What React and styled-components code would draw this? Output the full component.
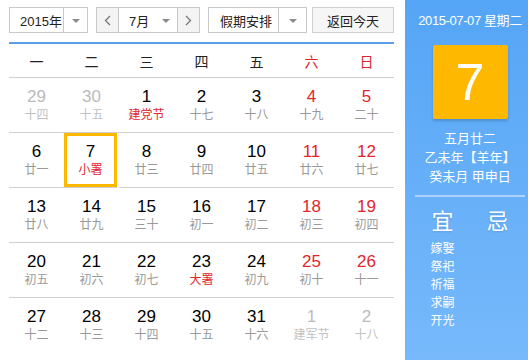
import React from 'react';
import styled, { createGlobalStyle, css } from 'styled-components';

const GlobalStyle = createGlobalStyle`
  body {
    margin: 0;
    font-family: "Liberation Sans", "Noto Sans CJK SC", sans-serif;
    background: #fff;
  }
`

const Page = styled.div`
  display: flex;
  width: 528px;
  height: 360px;
  overflow: hidden;
`

const Main = styled.div`
  width: 385px;
  padding: 7px 11px 0 9px;
`

const Toolbar = styled.div`
  display: flex;
  align-items: center;
  height: 26px;
  margin-bottom: 9px;
`

const Select = styled.div`
  display: flex;
  height: 26px;
  box-sizing: border-box;
  border: 1px solid #c9c9c9;
  background: #fff;
  width: ${p => p.$width}px;
  margin-right: ${p => p.$gap || 0}px;
  font-size: 13px;
  color: #222;
`

const SelectText = styled.div`
  flex: 1;
  display: flex;
  align-items: center;
  padding-left: ${p => p.$pad || 0}px;
`

const ArrowBox = styled.div`
  width: ${p => p.$w || 23}px;
  display: flex;
  align-items: center;
  justify-content: center;
  border-left: ${p => p.$line ? '1px solid #c9c9c9' : 'none'};
  &::after {
    content: '';
    border-left: 4px solid transparent;
    border-right: 4px solid transparent;
    border-top: 4px solid #8a8a8a;
    margin-top: 1px;
  }
`

const NavBtn = styled.div`
  width: 21px;
  display: flex;
  align-items: center;
  justify-content: center;
  background: #f4f4f4;
  ${p => p.$side === 'left' ? css`border-right: 1px solid #c9c9c9;` : css`border-left: 1px solid #c9c9c9;`}
`

const Button = styled.div`
  width: 82px;
  height: 26px;
  box-sizing: border-box;
  border: 1px solid #d0d0d0;
  background: #f6f6f6;
  display: flex;
  align-items: center;
  justify-content: center;
  font-size: 13px;
  color: #222;
`

const Grid = styled.div`
  display: grid;
  grid-template-columns: repeat(7, 55px);
  border-top: 2px solid #5a9ee8;
`

const Head = styled.div`
  height: 33px;
  display: flex;
  align-items: center;
  justify-content: center;
  font-size: 14px;
  color: ${p => p.$red ? '#d9262c' : '#222'};
  border-bottom: 1px solid #d0d0d0;
`

const Cell = styled.div`
  height: 54px;
  display: flex;
  flex-direction: column;
  align-items: center;
  justify-content: center;
  border-bottom: ${p => p.$last ? 'none' : '1px solid #d0d0d0'};
  ${p => p.$today && css`box-shadow: inset 0 0 0 3px #ffb800; margin-right: 2px;`}
`

const Num = styled.div`
  font-size: 17px;
  line-height: 20px;
  color: ${p => p.$other ? '#bbb' : p.$red ? '#e0262c' : '#000'};
`

const Lunar = styled.div`
  font-size: 12px;
  line-height: 17px;
  color: ${p => p.$other ? '#c2c2c2' : p.$fest ? '#e0262c' : '#999'};
`

const Side = styled.div`
  width: 123px;
  height: 360px;
  box-sizing: border-box;
  padding: 13px 3px 0 10px;
  background: linear-gradient(#55a5f6, #77b9fb);
  color: #fff;
  display: flex;
  flex-direction: column;
  align-items: center;
`

const DateLine = styled.div`
  font-size: 13px;
  line-height: 16px;
  letter-spacing: -0.4px;
  white-space: nowrap;
`

const BigDay = styled.div`
  width: 75px;
  height: 74px;
  margin: 16px 0 10px;
  background: #ffb800;
  border-radius: 2px;
  box-shadow: 0 2px 3px rgba(0, 0, 0, 0.18);
  display: flex;
  align-items: center;
  justify-content: center;
  font-size: 52px;
  line-height: 1;
`

const InfoLine = styled.div`
  font-size: 13px;
  line-height: 19px;
`

const Divider = styled.div`
  align-self: stretch;
  height: 2px;
  margin: 9px 0 12px;
  background: rgba(255, 255, 255, 0.45);
`

const Columns = styled.div`
  align-self: stretch;
  display: grid;
  grid-template-columns: 1fr 1fr;
`

const Col = styled.div`
  display: flex;
  flex-direction: column;
  align-items: center;
`

const Big = styled.div`
  font-size: 22px;
  line-height: 26px;
  margin-bottom: 5px;
  text-shadow: 0 1px 2px rgba(0, 0, 0, 0.12);
`

const Item = styled.div`
  font-size: 12px;
  line-height: 18px;
`

const heads = ['一', '二', '三', '四', '五', '六', '日'];

const days = [
  [29, '十四', 'o'], [30, '十五', 'o'], [1, '建党节', 'f'], [2, '十七'], [3, '十八'], [4, '十九'], [5, '二十'],
  [6, '廿一'], [7, '小署', 'f'], [8, '廿三'], [9, '廿四'], [10, '廿五'], [11, '廿六'], [12, '廿七'],
  [13, '廿八'], [14, '廿九'], [15, '三十'], [16, '初一'], [17, '初二'], [18, '初三'], [19, '初四'],
  [20, '初五'], [21, '初六'], [22, '初七'], [23, '大署', 'f'], [24, '初九'], [25, '初十'], [26, '十一'],
  [27, '十二'], [28, '十三'], [29, '十四'], [30, '十五'], [31, '十六'], [1, '建军节', 'o'], [2, '十八', 'o'],
];

const App = () => (
  <Page>
    <GlobalStyle />
    <Main>
      <Toolbar>
        <Select $width={79} $gap={8}>
          <SelectText $pad={10}>2015年</SelectText>
          <ArrowBox $line />
        </Select>
        <Select $width={104} $gap={8}>
          <NavBtn $side="left">
            <svg width="7" height="11" viewBox="0 0 7 11"><path d="M6 1 1.5 5.5 6 10" fill="none" stroke="#777" strokeWidth="1.3" /></svg>
          </NavBtn>
          <SelectText $pad={10}>7月</SelectText>
          <ArrowBox />
          <NavBtn $side="right">
            <svg width="7" height="11" viewBox="0 0 7 11"><path d="M1 1 5.5 5.5 1 10" fill="none" stroke="#777" strokeWidth="1.3" /></svg>
          </NavBtn>
        </Select>
        <Select $width={99} $gap={5}>
          <SelectText $pad={11}>假期安排</SelectText>
          <ArrowBox $line $w={27} />
        </Select>
        <Button>返回今天</Button>
      </Toolbar>
      <Grid>
        {heads.map((h, i) => <Head key={h} $red={i > 4}>{h}</Head>)}
        {days.map(([n, l, t], i) => {
          const col = i % 7;
          const other = t === 'o';
          return (
            <Cell key={i} $today={i === 8} $last={i >= 28}>
              <Num $other={other} $red={col > 4}>{n}</Num>
              <Lunar $other={other} $fest={t === 'f'}>{l}</Lunar>
            </Cell>
          );
        })}
      </Grid>
    </Main>
    <Side>
      <DateLine>2015-07-07 星期二</DateLine>
      <BigDay>7</BigDay>
      <InfoLine>五月廿二</InfoLine>
      <InfoLine>乙未年【羊年】</InfoLine>
      <InfoLine>癸未月 甲申日</InfoLine>
      <Divider />
      <Columns>
        <Col>
          <Big>宜</Big>
          {['嫁娶', '祭祀', '祈福', '求嗣', '开光'].map(x => <Item key={x}>{x}</Item>)}
        </Col>
        <Col>
          <Big>忌</Big>
        </Col>
      </Columns>
    </Side>
  </Page>
);

export default App;
